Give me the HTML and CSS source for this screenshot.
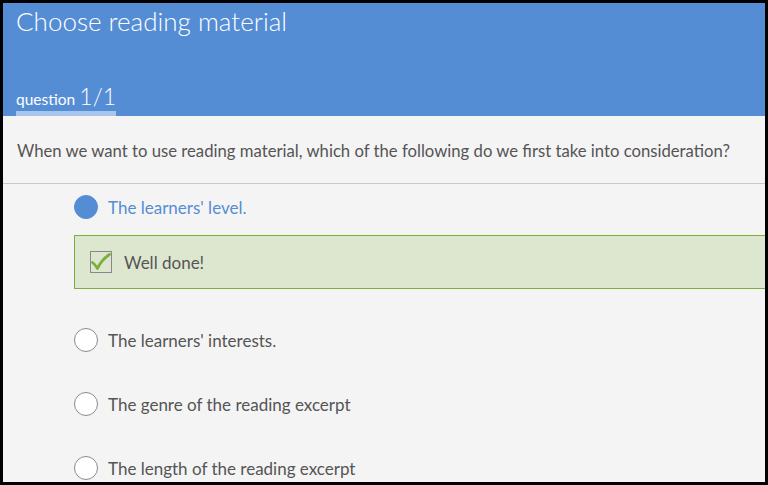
FILE: index.html
```html
<!DOCTYPE html>
<html>
<head>
<meta charset="utf-8">
<link rel="stylesheet" href="styles.css">
</head>
<body>
<div class="frame">
  <header class="header">
    <h1 class="title">Choose reading material</h1>
    <div class="counter"><span class="counter-label">question</span> <span class="counter-num">1/1</span></div>
  </header>
  <section class="question">
    <p class="question-text">When we want to use reading material, which of the following do we first take into consideration?</p>
  </section>
  <ul class="options">
    <li class="option selected"><span class="radio"></span><span class="label">The learners' level.</span></li>
    <li class="feedback">
      <span class="checkbox">
        <svg width="20" height="18" viewBox="0 0 20 18"><path d="M1.5 9.5 C3.5 11 5 13 6.5 15.5 C9 10 13 5 18.5 1.5" fill="none" stroke="#7cae3c" stroke-width="2.8" stroke-linecap="round" stroke-linejoin="round"/></svg>
      </span>
      <span class="feedback-text">Well done!</span>
    </li>
    <li class="option spaced"><span class="radio"></span><span class="label">The learners' interests.</span></li>
    <li class="option"><span class="radio"></span><span class="label">The genre of the reading excerpt</span></li>
    <li class="option"><span class="radio"></span><span class="label">The length of the reading excerpt</span></li>
  </ul>
</div>
</body>
</html>
```

FILE: styles.css
```css
* { box-sizing: border-box; }
html, body { margin: 0; padding: 0; }
body { width: 768px; height: 485px; overflow: hidden; background: #000; font-family: Lato, "Open Sans", sans-serif; }
.frame {
  width: 768px; height: 485px;
  border: 3px solid #000;
  background: #f4f4f4;
  overflow: hidden;
}
.header {
  background: #558dd5;
  height: 113px;
  padding: 0 0 0 13px;
  display: flex; flex-direction: column; justify-content: space-between;
}
.title {
  margin: 0; padding-top: 3px;
  font-weight: 300; font-size: 26px; line-height: 30px; color: #fff;
}
.counter {
  align-self: flex-start;
  color: #fff; line-height: 24px;
  border-bottom: 5px solid #a9c5ea;
}
.counter-label { font-size: 15.5px; font-weight: 400; }
.counter-num { font-size: 23px; font-weight: 300; }
.question {
  height: 68px;
  border-bottom: 1px solid #c9c9c9;
  display: flex; align-items: center;
  padding: 2px 0 0 14px;
}
.question-text { margin: 0; font-size: 16.7px; color: #555; white-space: nowrap; }
.options { list-style: none; margin: 0; padding: 11px 0 0 71px; }
.option { display: flex; align-items: center; height: 24px; margin-bottom: 40px; }
.option.selected { margin-bottom: 16px; }
.option.spaced { margin-top: 39px; }
.radio {
  width: 24px; height: 24px; border-radius: 50%;
  border: 1.5px solid #8a8a8a; background: #fff; flex: none;
}
.selected .radio { background: #558dd5; border-color: #558dd5; }
.label { margin-left: 10px; font-size: 17px; color: #555; white-space: nowrap; }
.selected .label { color: #558dd5; }
.feedback {
  height: 54px; margin-right: -20px;
  background: #dde7cf; border: 1px solid #7cae3c;
  display: flex; align-items: center; padding-left: 15px;
}
.checkbox {
  width: 22px; height: 22px; border: 1px solid #888; flex: none;
  display: flex; align-items: center; justify-content: center;
}
.feedback-text { margin-left: 12px; font-size: 17px; color: #555; }
```
